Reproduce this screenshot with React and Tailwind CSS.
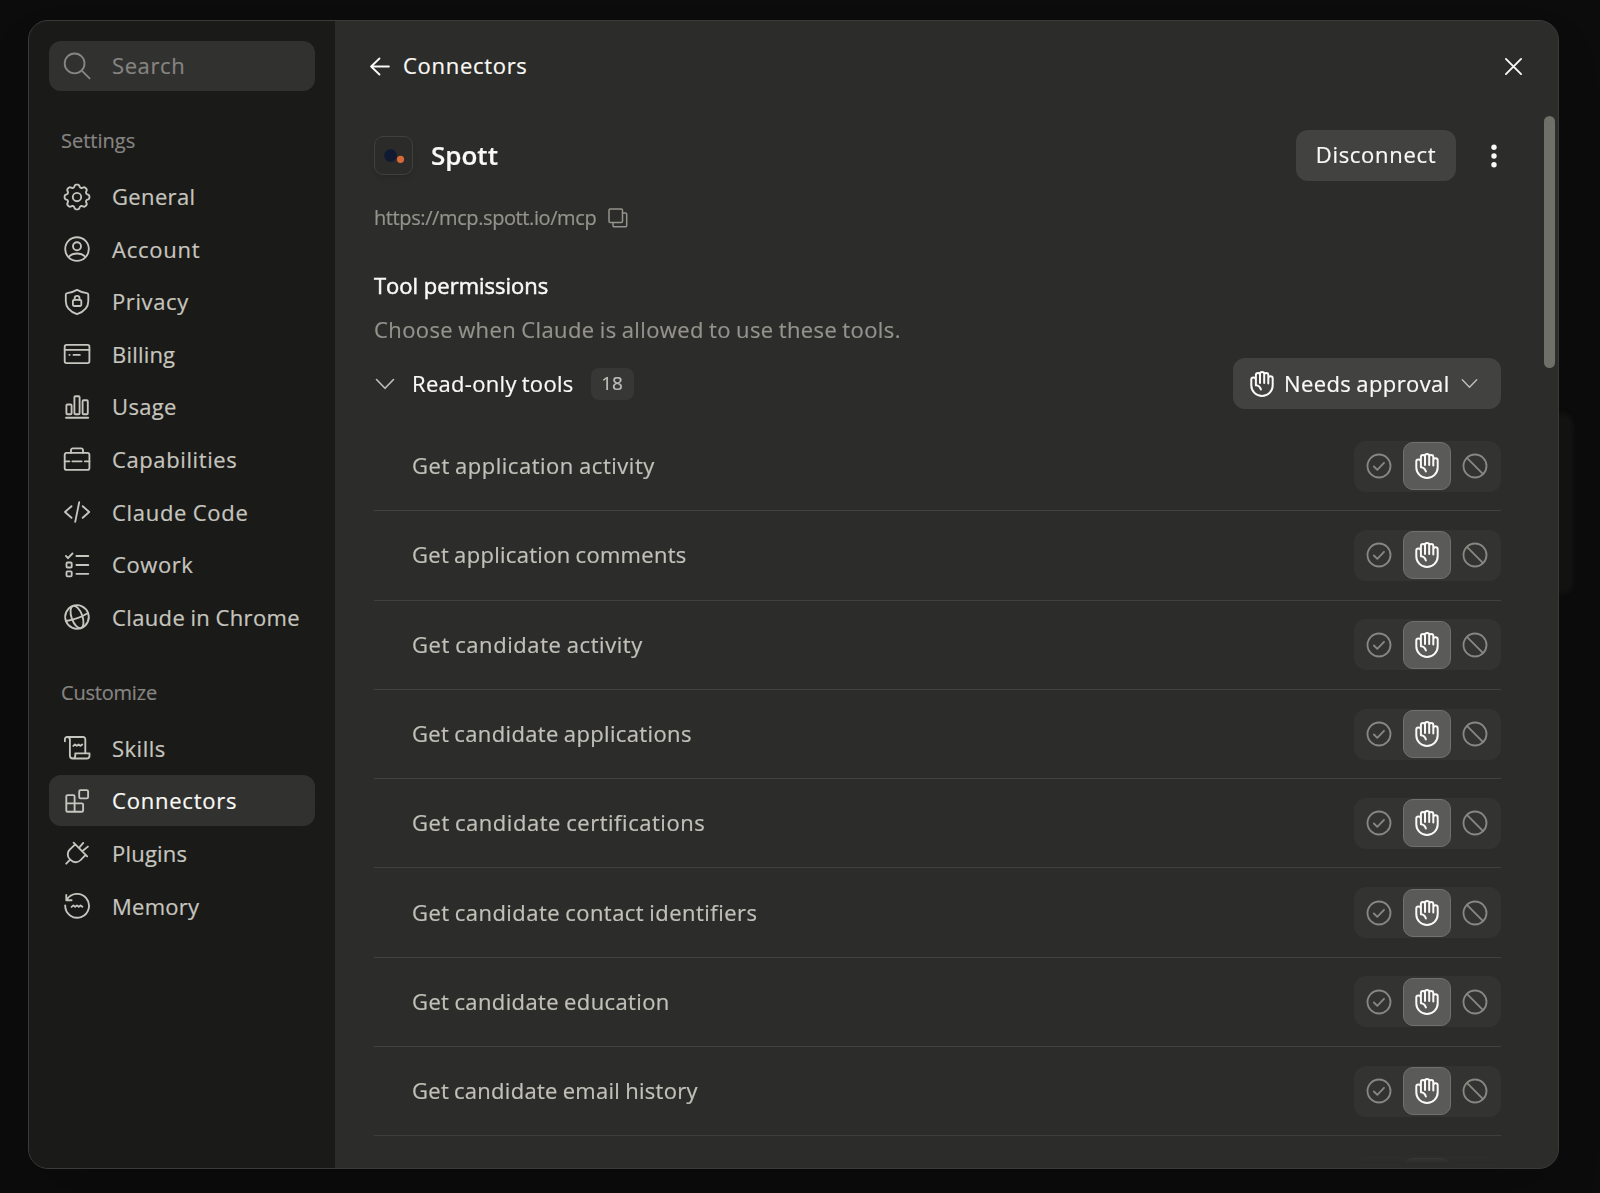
import React from 'react';

const round = (n) => Math.round(n * 100) / 100;

// Eight soft lobes around a 28px box
const gearPath = `M${Array.from({ length: 96 }, (_, i) => {
  const a = (i / 96) * Math.PI * 2 - Math.PI / 2;
  const r = 11.1 + 1.35 * Math.tanh(1.8 * (Math.cos(8 * (a + Math.PI / 2)) + 0.25));
  return `${round(14 + r * Math.cos(a))} ${round(14 + r * Math.sin(a))}`;
}).join('L')}Z`;

const icons = {
  search: (
    <>
      <circle cx="11.6" cy="11.4" r="9.9" />
      <path d="M18.8 18.6 26.6 26.4" />
    </>
  ),
  general: (
    <>
      <path d={gearPath} />
      <circle cx="14" cy="14" r="4.2" />
    </>
  ),
  account: (
    <>
      <circle cx="14" cy="14" r="11.8" />
      <circle cx="14" cy="11.2" r="4" />
      <path d="M5.6 21.9c2.2-2.3 5-3.4 8.4-3.4s6.2 1.1 8.4 3.4" />
    </>
  ),
  privacy: (
    <>
      <path d="M14 1.9c3.5 2 7 3 9.8 3.2.9.1 1.5.7 1.5 1.6v6.5c0 6-4.3 10.4-11.3 13C7 23.6 2.8 19.2 2.8 13.2V6.7c0-.9.6-1.5 1.5-1.6C7 4.9 10.5 3.9 14 1.9Z" />
      <rect x="9.9" y="11.9" width="8.4" height="6.1" rx="1.2" />
      <path d="M11.7 11.9v-1.7a2.4 2.4 0 0 1 4.8 0v1.7" />
    </>
  ),
  billing: (
    <>
      <rect x="1.7" y="4.9" width="24.7" height="18.2" rx="1.8" />
      <path d="M1.7 9.9h24.7M6.4 14.9h.2M10.5 14.9h6.3" />
    </>
  ),
  usage: (
    <>
      <rect x="3.4" y="11.5" width="5.2" height="9.7" rx="1" />
      <rect x="11.4" y="3.2" width="5.2" height="18" rx="1" />
      <rect x="19.6" y="7.2" width="5.2" height="14" rx="1" />
      <path d="M3 24.7h22.2" />
    </>
  ),
  capabilities: (
    <>
      <rect x="1.7" y="7.9" width="24.7" height="17" rx="2" />
      <path d="M8 7.9V5.2A1.8 1.8 0 0 1 9.8 3.4h8.4A1.8 1.8 0 0 1 20 5.2v2.7M1.7 16.3h4.7M9.4 16.3h9.2M21.8 16.3h4.6" />
    </>
  ),
  code: <path d="M8.5 8.2 2 14l6.5 5.8M16.2 4.2 12.2 23.9M19.7 8.2 26.2 14l-6.5 5.8" />,
  cowork: (
    <>
      <path d="M2.9 4.9 5 7.2 9.5 2.5M13.4 5h11.9M13.4 14h11.9M13.4 22.8h11.9" />
      <rect x="3.5" y="11.5" width="5.2" height="5" rx="1" />
      <rect x="3.5" y="20.3" width="5.2" height="5" rx="1" />
    </>
  ),
  chrome: (
    <g transform="rotate(-20 14 14)">
      <circle cx="14" cy="14" r="11.8" />
      <ellipse cx="14" cy="14" rx="5.4" ry="11.8" />
      <path d="M2.2 14q11.8 2.4 23.6 0" />
    </g>
  ),
  skills: (
    <>
      <path d="M1.9 7.2V5.4A2.3 2.3 0 0 1 4.2 3h15.9a2.2 2.2 0 0 1 2.2 2.2v13.5" />
      <path d="M4.4 3A2.5 2.5 0 0 1 6.9 5.5v16a3 3 0 0 0 3 3h13.8a2.8 2.8 0 0 0 2.8-2.8v-2.4H12.3v2.2a3 3 0 0 1-3 3" />
      <path d="M10.3 11.9l1.7-1.5 1.8 1.5 1.8-1.5 1.7 1.5 1.9-1.4" />
    </>
  ),
  connectors: (
    <>
      <path d="M3.3 9.4A1.3 1.3 0 0 1 4.6 8.1h5.7a1.3 1.3 0 0 1 1.3 1.3v6.9h7.2a1.3 1.3 0 0 1 1.3 1.3v5.8a1.3 1.3 0 0 1-1.3 1.3H4.6a1.3 1.3 0 0 1-1.3-1.3ZM3.3 16.3h8.3v8.4" />
      <rect x="16.2" y="3.1" width="8.9" height="8.3" rx="1.3" />
    </>
  ),
  plugins: (
    <path d="M10.6 3.7 24.2 17.4M16 8.9l4.3-5M19.2 12.2l5.7-4.6M12.2 5.3 7 10.3a6.8 6.8 0 0 0-.2 9.9l1 1a6.8 6.8 0 0 0 9.9-.2l4.9-5.2M7.2 20.7 3.2 24.7" />
  ),
  memory: (
    <>
      <path d="M3.3 2.9v5.3h5.3M3.7 8A11.9 11.9 0 1 1 2.2 13.5" />
      <path d="M8.6 14.9l1.8-1.5 1.8 1.5 1.8-1.5 1.8 1.5 1.8-1.5 1.8 1.3" />
    </>
  ),
  check: (
    <>
      <circle cx="14" cy="14" r="11.5" />
      <path d="M8.9 14.5 12.3 17.8 19 10.8" />
    </>
  ),
  block: (
    <>
      <circle cx="14" cy="14" r="11.5" />
      <path d="M5.9 5.9 22.1 22.1" />
    </>
  ),
};

const Icon = ({ name, className = '' }) => (
  <svg
    viewBox="0 0 28 28"
    className={`w-7 h-7 shrink-0 ${className}`}
    fill="none"
    stroke="currentColor"
    strokeWidth="1.85"
    strokeLinecap="round"
    strokeLinejoin="round"
  >
    {icons[name]}
  </svg>
);

const HandIcon = () => (
  <svg viewBox="0 0 24 26" className="w-6 h-[26px] shrink-0" fill="none" stroke="currentColor" strokeWidth="2" strokeLinecap="round" strokeLinejoin="round">
    <path d="M5.9 14.3V4a2.05 2.05 0 0 1 4.1 0v8M10 4V3.1a2.1 2.1 0 0 1 4.2 0V12M14.2 4a2.05 2.05 0 0 1 4.1 0v8.6M18.3 7.5a2.2 2.2 0 0 1 4.4 0v6.8a10.7 10.7 0 0 1-21.4 0V8.6A2 2 0 0 1 3.3 6.6c1.5 0 2.6.9 2.6 2.4M5.9 14.3c2.5.3 4.3 1.7 5 4.3" />
  </svg>
);

const Chevron = ({ className = '' }) => (
  <svg viewBox="0 0 20 12" className={`shrink-0 ${className}`} fill="none" stroke="currentColor" strokeWidth="1.6" strokeLinecap="round" strokeLinejoin="round">
    <path d="M1.5 1.5 10 10.3 18.5 1.5" />
  </svg>
);

const settings = [
  { icon: 'general', label: 'General', tracking: 'tracking-[0.35px]' },
  { icon: 'account', label: 'Account', tracking: 'tracking-[0.75px]' },
  { icon: 'privacy', label: 'Privacy', tracking: 'tracking-[0.6px]' },
  { icon: 'billing', label: 'Billing', tracking: 'tracking-[0.2px]' },
  { icon: 'usage', label: 'Usage', tracking: 'tracking-[0.35px]' },
  { icon: 'capabilities', label: 'Capabilities', tracking: 'tracking-[0.6px]' },
  { icon: 'code', label: 'Claude Code', tracking: 'tracking-[0.7px] [word-spacing:-0.8px]' },
  { icon: 'cowork', label: 'Cowork', tracking: 'tracking-[0.6px]' },
  { icon: 'chrome', label: 'Claude in Chrome', tracking: 'tracking-[0.37px] [word-spacing:-0.8px]' },
];

const customize = [
  { icon: 'skills', label: 'Skills', tracking: 'tracking-[0.5px]' },
  { icon: 'connectors', label: 'Connectors', tracking: 'tracking-[0.78px]', active: true },
  { icon: 'plugins', label: 'Plugins', tracking: 'tracking-[0.2px]' },
  { icon: 'memory', label: 'Memory', tracking: 'tracking-[0.25px]' },
];

const tools = [
  { label: 'Get application activity', tracking: 'tracking-[0.52px]' },
  { label: 'Get application comments', tracking: 'tracking-[0.3px]' },
  { label: 'Get candidate activity', tracking: 'tracking-[0.57px]' },
  { label: 'Get candidate applications', tracking: 'tracking-[0.36px]' },
  { label: 'Get candidate certifications', tracking: 'tracking-[0.53px]' },
  { label: 'Get candidate contact identifiers', tracking: 'tracking-[0.46px]' },
  { label: 'Get candidate education', tracking: 'tracking-[0.38px]' },
  { label: 'Get candidate email history', tracking: 'tracking-[0.28px]' },
];

const NavGroup = ({ title, titleTracking, items }) => (
  <div>
    <div className={`h-7 pl-3 text-[20px] leading-7 text-[#868581] ${titleTracking}`}>{title}</div>
    <nav className="mt-4 flex flex-col gap-[1.6px]">
      {items.map((item) => (
        <button
          key={item.label}
          className={`h-[51px] pl-3.5 flex items-center gap-[21px] rounded-xl text-[22px] whitespace-nowrap ${item.tracking} ${item.active ? 'bg-[#313130] text-[#faf9f5]' : 'text-[#c6c5be]'}`}
        >
          <Icon name={item.icon} className="text-[#c6c5be]" />
          {item.label}
        </button>
      ))}
    </nav>
  </div>
);

const PermissionToggle = () => (
  <div className="h-[51px] w-[147px] rounded-xl bg-[#333332] flex items-center justify-between pl-[11px] pr-3 text-[#888782]">
    <Icon name="check" />
    <div className="w-12 h-12 rounded-[10px] border border-[#70706d] bg-[#5a5a59] flex items-center justify-center text-[#faf9f5]">
      <HandIcon />
    </div>
    <Icon name="block" />
  </div>
);

const ToolRow = ({ label, tracking }) => (
  <div className="h-[89.3px] shrink-0 pl-[38px] border-b border-[#41413f] flex items-center justify-between text-[22px] text-[#c2c1b9]">
    <span className={`pb-px [word-spacing:-1px] ${tracking}`}>{label}</span>
    <PermissionToggle />
  </div>
);

export default function App() {
  return (
    <div className="relative w-[1600px] h-[1193px] overflow-hidden bg-[#0c0c0c] pl-7 pt-5 font-['Open_Sans',sans-serif] [-webkit-text-stroke:0.2px_currentColor]">
      {/* dimmed page card peeking out behind the dialog */}
      <div className="absolute left-[1500px] top-[413px] w-[73px] h-[181px] rounded-xl bg-[#141413] blur-[2px]"></div>

      <div className="relative w-[1531px] h-[1149px] rounded-[20px] border border-[#3a3a38] bg-[#2c2c2a] overflow-hidden flex shadow-2xl">
        <aside className="w-[306px] shrink-0 bg-[#1a1a19] px-5 pt-5">
          <div className="h-[50px] rounded-xl bg-[#313130] pl-3.5 flex items-center gap-[21px] text-[22px] text-[#868581]">
            <Icon name="search" />
            <span className="pb-0.5 tracking-[0.6px]">Search</span>
          </div>
          <div className="mt-9">
            <NavGroup title="Settings" items={settings} />
          </div>
          <div className="mt-9">
            <NavGroup title="Customize" titleTracking="tracking-[-0.2px]" items={customize} />
          </div>
        </aside>

        <main className="flex-1 min-w-0 flex flex-col">
          <header className="h-[90px] shrink-0 pl-[35px] pr-[35px] flex items-center justify-between text-[#faf9f5]">
            <div className="flex items-center gap-[13px] text-[22px]">
              <svg viewBox="0 0 22 20" className="w-5 h-[19px]" fill="none" stroke="currentColor" strokeWidth="2" strokeLinecap="round" strokeLinejoin="round">
                <path d="M20.8 10H1.2M10.4 1.2 1.2 10 10.4 18.8" />
              </svg>
              <span className="pb-0.5 tracking-[0.7px]">Connectors</span>
            </div>
            <svg viewBox="0 0 20 20" className="w-[19px] h-[19px]" fill="none" stroke="currentColor" strokeWidth="2" strokeLinecap="round">
              <path d="M2 2 18 18M18 2 2 18" />
            </svg>
          </header>

          <div className="flex-1 min-h-0 pl-[39px] pr-[57px] flex flex-col overflow-hidden [mask-image:linear-gradient(to_bottom,black_calc(100%-36px),transparent_calc(100%-4px))]">
            <div className="mt-[19px] h-[51px] shrink-0 flex items-center text-[#faf9f5]">
              <div className="w-[39px] h-[39px] rounded-[9px] border border-[#40403e] bg-[#2b2b29] shadow-md">
                <svg viewBox="0 0 37 37" className="w-full h-full">
                  <circle cx="15.5" cy="18.5" r="6.3" fill="#101a33" />
                  <circle cx="25.5" cy="22.3" r="3.6" fill="#d8693a" />
                </svg>
              </div>
              <h1 className="ml-[18px] text-[26px] font-semibold">Spott</h1>
              <button className="ml-auto w-40 h-[51px] rounded-xl bg-[#424241] pb-0.5 text-[22px] tracking-[0.7px]">Disconnect</button>
              <svg viewBox="0 0 8 26" className="ml-[34px] mr-[3px] w-2 h-[26px]" fill="currentColor">
                <circle cx="4" cy="4.2" r="2.7" />
                <circle cx="4" cy="13" r="2.7" />
                <circle cx="4" cy="21.8" r="2.7" />
              </svg>
            </div>

            <div className="mt-[23px] h-7 shrink-0 flex items-center gap-3 text-[20px] text-[#94938c]">
              <span className="tracking-[-0.4px]">https://mcp.spott.io/mcp</span>
              <svg viewBox="0 0 20 20" className="w-5 h-5" fill="none" stroke="currentColor" strokeWidth="1.5" strokeLinejoin="round" strokeLinecap="round">
                <rect x="1" y="1" width="13.5" height="13.5" rx="1.2" />
                <path d="M14.5 5h3a1.2 1.2 0 0 1 1.2 1.2v11.3a1.2 1.2 0 0 1-1.2 1.2H6.2A1.2 1.2 0 0 1 5 17.5v-3" />
              </svg>
            </div>

            <h2 className="mt-[37px] h-8 shrink-0 text-[22px] leading-8 text-[#faf9f5] [-webkit-text-stroke:0.5px_#faf9f5]">Tool permissions</h2>
            <p className="mt-3 h-8 shrink-0 text-[22px] leading-8 text-[#94938c] tracking-[0.4px] [word-spacing:-1px]">Choose when Claude is allowed to use these tools.</p>

            <div className="mt-[13px] h-[51px] shrink-0 flex items-center text-[22px] text-[#faf9f5]">
              <Chevron className="ml-px w-5 h-3 text-[#c2c1b9]" />
              <span className="ml-[17px] tracking-[0.3px] [word-spacing:-1px]">Read-only tools</span>
              <span className="ml-[17px] w-[43px] h-8 rounded-lg bg-[#373736] flex items-center justify-center text-[19px] text-[#c2c1b9]">18</span>
              <button className="ml-auto w-[268px] h-[51px] rounded-xl bg-[#424241] pl-[17px] flex items-center">
                <HandIcon />
                <span className="ml-2.5 whitespace-nowrap tracking-[0.4px] [word-spacing:-1px]">Needs approval</span>
                <Chevron className="ml-auto mr-[23px] w-[17px] h-[11px] text-[#c2c1b9]" />
              </button>
            </div>

            <div className="mt-[13px] flex flex-col">
              {tools.map((tool) => (
                <ToolRow key={tool.label} label={tool.label} tracking={tool.tracking} />
              ))}
              <div className="mt-5 self-end">
                <PermissionToggle />
              </div>
            </div>
          </div>
        </main>

        {/* scrollbar thumb */}
        <div className="absolute right-[3px] top-[95px] w-[11px] h-[252px] rounded-full bg-[#6f7068]"></div>
      </div>
    </div>
  );
}
